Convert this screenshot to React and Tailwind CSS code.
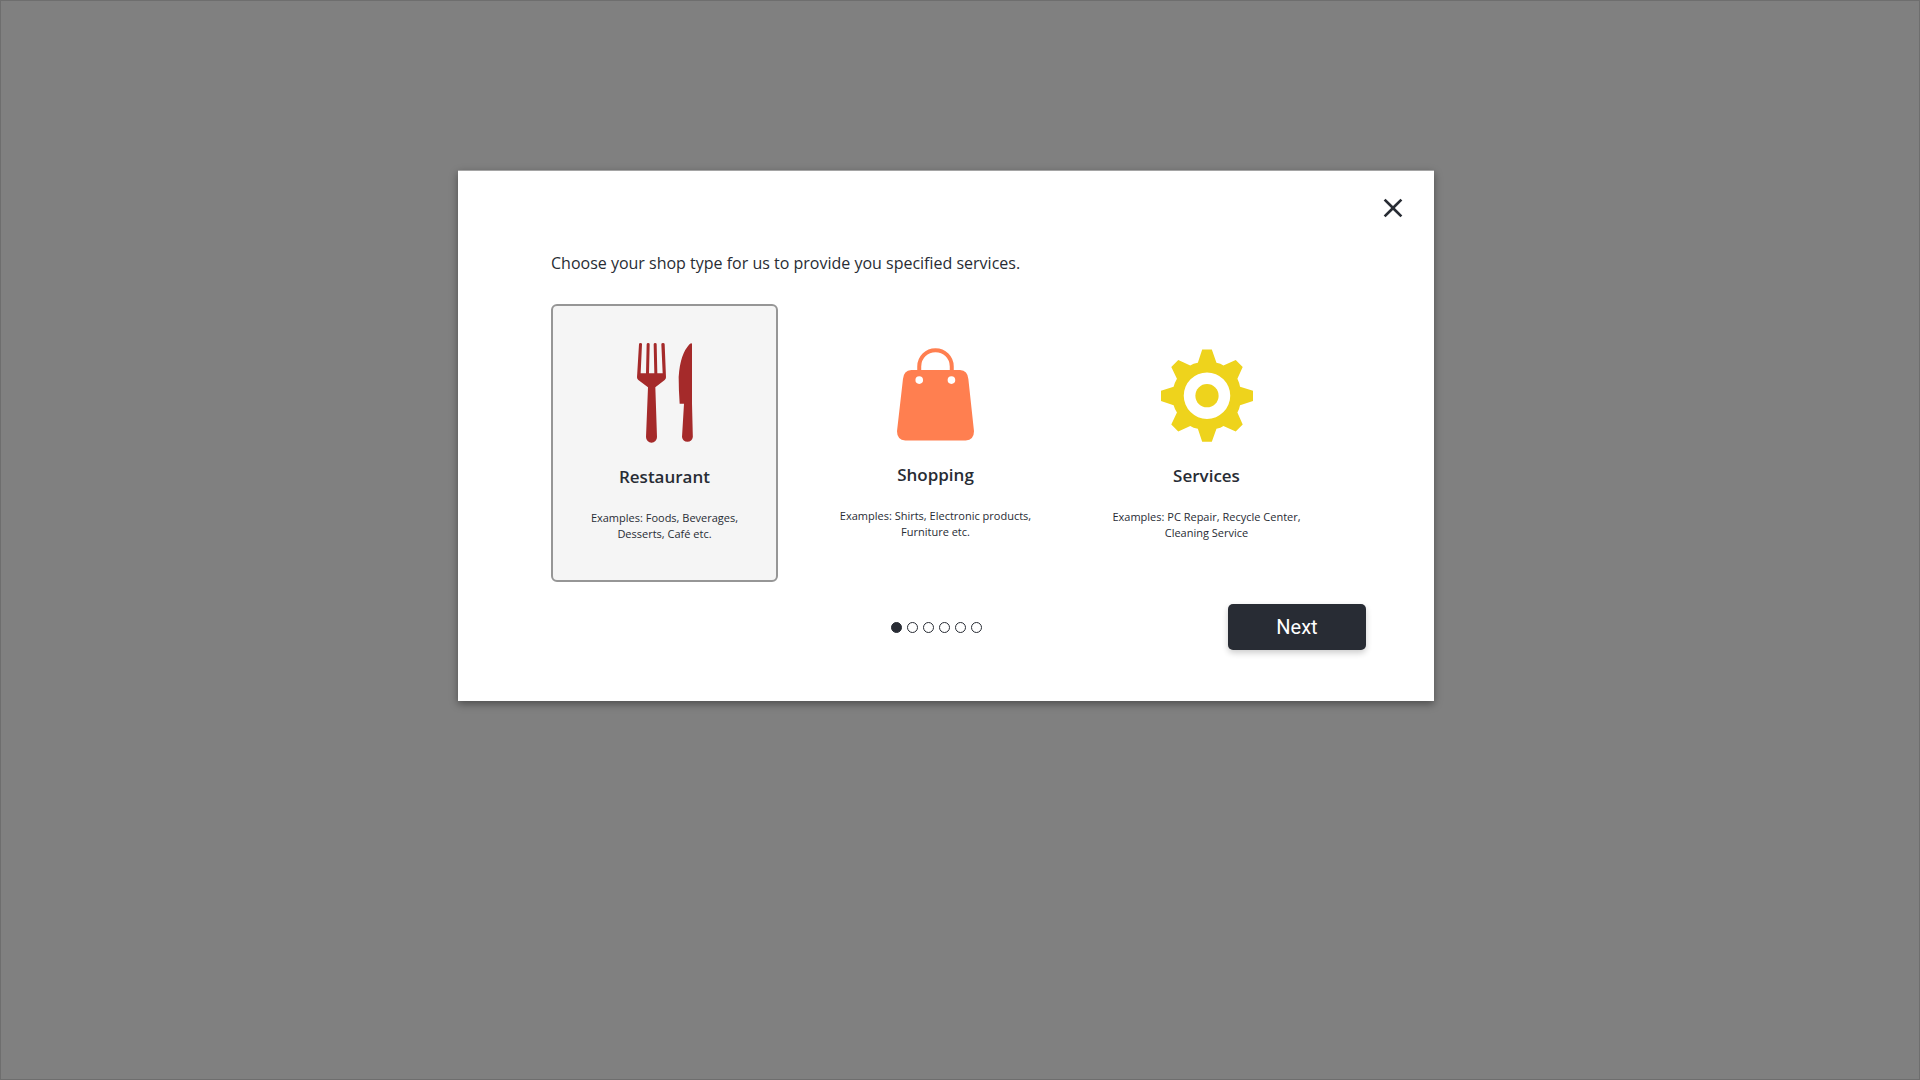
import { useState } from "react";

function CutleryIcon() {
  return (
    <svg viewBox="291 143 168 300" className="h-[100px] w-14" fill="#a52a2a" aria-hidden="true">
      <path d="M297 147Q297 143 301.500 143T306 147L302 234H318L320 147Q320 143 324.500 143T329 147L327 234H343L341 147Q341 143 345.500 143T350 147L352 234H368L364 147Q364 143 369 143T374 147L378 246Q378 251 374 254L346 276L351 425A16.500 17.500 0 0 1 318 425L324 276L295 254Q291 251 291 246Z" />
      <path d="M456 145V325L458.500 425A16.500 17.500 0 0 1 426 425L432 325H419Q416 285 416 245Q420 175 450 145Q455 142 456 145Z" />
    </svg>
  );
}

function BagIcon() {
  return (
    <svg viewBox="233 54 232 279" className="h-[93px] w-[77px]" aria-hidden="true">
      <path d="M300 124V109A49 49 0 0 1 398 109V124" fill="none" stroke="#ff7f50" strokeWidth="12" />
      <path d="M276 120H423Q446 122 448 147L465 304Q465 330 440 332H258Q233 330 233 304L251 147Q253 122 276 120Z" fill="#ff7f50" />
      <circle cx="300" cy="150" r="11.500" fill="#fff" />
      <circle cx="397" cy="150" r="11.500" fill="#fff" />
    </svg>
  );
}

function GearIcon() {
  return (
    <svg viewBox="206 38 277 297" className="h-[99px] w-[92px]" fill="#eed31c" aria-hidden="true">
      <path
        fillRule="evenodd"
        d="M330 57H359L373 97Q386 99 394 105L431 89L452 110L436 145Q442 157 444 169L483 181V212L444 225Q442 236 436 247L452 283L431 304L394 287Q386 293 373 296L359 335H330L317 296Q303 293 294 287L258 304L237 283L254 247Q247 236 244 225L206 212V181L244 169Q247 157 254 145L237 110L258 89L294 105Q303 99 317 97ZM344.500 126A70 70 0 1 0 344.500 266A70 70 0 1 0 344.500 126Z"
      />
      <circle cx="344.500" cy="196" r="35" />
    </svg>
  );
}

const shopTypes = [
  { id: "restaurant", title: "Restaurant", lines: ["Examples: Foods, Beverages,", "Desserts, Café etc."], Icon: CutleryIcon },
  { id: "shopping", title: "Shopping", lines: ["Examples: Shirts, Electronic products,", "Furniture etc."], Icon: BagIcon },
  { id: "services", title: "Services", lines: ["Examples: PC Repair, Recycle Center,", "Cleaning Service"], Icon: GearIcon },
];

const steps = [0, 1, 2, 3, 4, 5];

export default function App() {
  const [selected, setSelected] = useState("restaurant");

  return (
    <main className="flex min-h-screen items-start justify-center border border-[#6e6e6e] bg-[#808080] pt-[169px] pr-7 font-['Open_Sans',sans-serif] text-[#282c34]">
      <form
        role="dialog"
        aria-labelledby="shop-type-heading"
        onSubmit={(e) => e.preventDefault()}
        className="w-full max-w-[976px] border-t border-[#a5a5a5] bg-white pb-[51px] shadow-[0_3px_8px_rgba(0,0,0,0.4)]"
      >
        <div className="flex justify-end pt-[21px] pr-[25px]">
          <button type="button" aria-label="Close" className="size-8">
            <svg viewBox="0 0 24 24" className="size-8" fill="currentColor" aria-hidden="true">
              <path d="M19 6.410L17.590 5 12 10.590 6.410 5 5 6.410 10.590 12 5 17.590 6.410 19 12 13.410 17.590 19 19 17.590 13.410 12z" />
            </svg>
          </button>
        </div>

        <h1 id="shop-type-heading" className="mt-[27px] ml-[93px] text-base leading-6 font-normal">
          Choose your shop type for us to provide you specified services.
        </h1>

        <div role="radiogroup" aria-labelledby="shop-type-heading" className="mt-[29px] mr-[114px] ml-[93px] grid grid-cols-3 gap-11">
          {shopTypes.map(({ id, title, lines, Icon }) => (
            <label
              key={id}
              className={`relative flex cursor-pointer flex-col items-center rounded-md border-2 pt-[37px] pb-[38px] text-center ${
                selected === id ? "border-[#969696] bg-[#f5f5f5]" : "border-transparent"
              }`}
            >
              <input
                type="radio"
                name="shop-type"
                value={id}
                checked={selected === id}
                onChange={() => setSelected(id)}
                className="sr-only"
              />
              <span className="flex min-h-[98px] items-end">
                <Icon />
              </span>
              <span className="mt-[22px] text-[17px] leading-6 font-semibold">{title}</span>
              <span className="mt-[21px] text-[11px] leading-4 whitespace-nowrap">
                {lines[0]}
                <br />
                {lines[1]}
              </span>
            </label>
          ))}
        </div>

        <div className="mt-[22px] grid grid-cols-[1fr_auto_1fr] items-center pr-[68px] pl-12">
          <ol aria-label="Step 1 of 6" className="col-start-2 flex gap-[5px]">
            {steps.map((step) => (
              <li
                key={step}
                aria-current={step === 0 ? "step" : undefined}
                className={`size-[11px] rounded-full border border-[#282c34] ${step === 0 ? "bg-[#282c34]" : "bg-white"}`}
              />
            ))}
          </ol>
          <button
            type="submit"
            className="h-[46px] w-[138px] justify-self-end rounded-[5px] bg-[#282c34] font-[Roboto,sans-serif] text-xl text-white shadow-[0_3px_6px_rgba(0,0,0,0.2)]"
          >
            Next
          </button>
        </div>
      </form>
    </main>
  );
}
